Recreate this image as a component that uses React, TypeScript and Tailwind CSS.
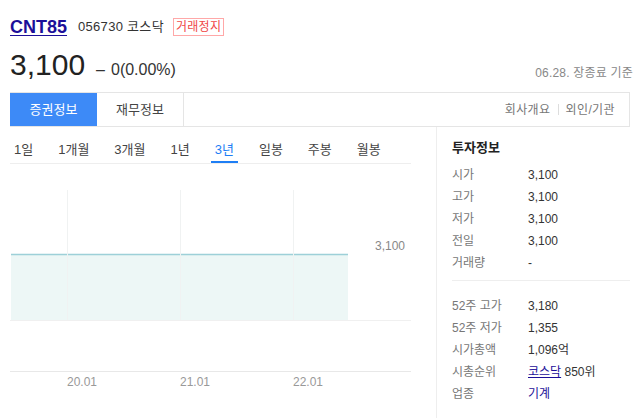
import React from "react";

const font = { fontFamily: '"Liberation Sans", "Noto Sans CJK KR", sans-serif' };

const periods = ["1일", "1개월", "3개월", "1년", "3년", "일봉", "주봉", "월봉"];

const quote = [
  ["시가", "3,100"],
  ["고가", "3,100"],
  ["저가", "3,100"],
  ["전일", "3,100"],
  ["거래량", "-"],
];

function Row({ label, children }: { label: string; children: React.ReactNode }) {
  return (
    <div className="flex h-[22px] items-center text-[12px]">
      <span className="w-[76px] text-[#777]">{label}</span>
      <span className="text-[#333]">{children}</span>
    </div>
  );
}

function Chart() {
  return (
    <div className="relative h-[254px]">
      <svg width="426" height="254" className="absolute left-0 top-0">
        <rect x="1" y="91" width="337" height="65" fill="#edf7f6" />
        <line x1="1" y1="90.5" x2="338" y2="90.5" stroke="#9dd0d8" strokeWidth="1.5" />
        {[57.5, 170.5, 283.5].map((x) => (
          <line key={x} x1={x} y1="26" x2={x} y2="156" stroke="#f0f2f2" strokeWidth="1" />
        ))}
        <line x1="0" y1="156.5" x2="401" y2="156.5" stroke="#f0f0f0" />
        <line x1="0" y1="207.5" x2="401" y2="207.5" stroke="#e8e8e8" />
      </svg>
      <span className="absolute left-[365px] top-[73px] text-[12px] text-[#888]">3,100</span>
      <span className="absolute left-[57px] top-[209px] text-[12px] text-[#999]">20.01</span>
      <span className="absolute left-[170px] top-[209px] text-[12px] text-[#999]">21.01</span>
      <span className="absolute left-[283px] top-[209px] text-[12px] text-[#999]">22.01</span>
    </div>
  );
}

export default function App() {
  return (
    <div style={font} className="h-[418px] w-[644px] overflow-hidden bg-white px-[10px] pt-[14px]">
      <div className="flex h-[26px] items-center">
        <a className="text-[18px] font-bold text-[#1c0f99] underline underline-offset-2">CNT85</a>
        <span className="ml-[11px] text-[13px] tracking-[0.3px] text-[#333]">056730 코스닥</span>
        <span className="ml-[9px] border border-[#ffa8a8] px-[2px] text-[12px] leading-[16px] tracking-[0.3px] text-[#f04848]">
          거래정지
        </span>
      </div>
      <div className="flex h-[50px] items-end justify-between pb-[8px]">
        <div className="flex items-baseline">
          <span className="text-[30px] leading-[32px] text-[#222]">3,100</span>
          <span className="ml-[11px] text-[16px] text-[#333]">–</span>
          <span className="ml-[6px] text-[16px] text-[#333]">0(0.00%)</span>
        </div>
        <span className="mr-[1px] text-[12px] tracking-[0.2px] text-[#888]">06.28. 장종료 기준</span>
      </div>
      <div className="mt-[2px] flex h-[35px] w-[620px] border border-l-0 border-[#e5e5e5]">
        <div className="flex w-[87px] items-center justify-center bg-[#3d8af7] text-[13px] text-white">증권정보</div>
        <div className="flex w-[87px] items-center justify-center border-r border-[#e5e5e5] text-[13px] text-[#444]">
          재무정보
        </div>
        <div className="flex flex-1 items-center justify-end pr-[14px] text-[12px] tracking-[0.4px] text-[#777]">
          <span>회사개요</span>
          <span className="mx-[7px] h-[11px] w-px bg-[#ddd]" />
          <span>외인/기관</span>
        </div>
      </div>
      <div className="flex">
        <div className="w-[426px]">
          <div className="flex h-[37px] w-[401px] items-end border-b border-[#eeeeee]">
            <div className="flex gap-[17px]">
              {periods.map((p) => (
                <span
                  key={p}
                  className={
                    p === "3년"
                      ? "border-b-2 border-[#1e7ef5] px-[4px] pb-[2px] text-[13px] text-[#1e7ef5]"
                      : "border-b-2 border-transparent px-[4px] pb-[2px] text-[13px] text-[#444]"
                  }
                >
                  {p}
                </span>
              ))}
            </div>
          </div>
          <Chart />
        </div>
        <div className="h-[292px] w-[194px] border-l border-[#eeeeee] pl-[15px] pt-[11px]">
          <div className="mb-[6px] text-[13px] font-bold text-[#222]">투자정보</div>
          {quote.map(([l, v]) => (
            <Row key={l} label={l}>
              {v}
            </Row>
          ))}
          <div className="mb-[14px] mt-[6px] border-t border-[#eeeeee]" />
          <Row label="52주 고가">3,180</Row>
          <Row label="52주 저가">1,355</Row>
          <Row label="시가총액">1,096억</Row>
          <Row label="시총순위">
            <a className="text-[#1c0f99] underline">코스닥</a> 850위
          </Row>
          <Row label="업종">
            <span className="text-[#1c0f99]">기계</span>
          </Row>
        </div>
      </div>
    </div>
  );
}
